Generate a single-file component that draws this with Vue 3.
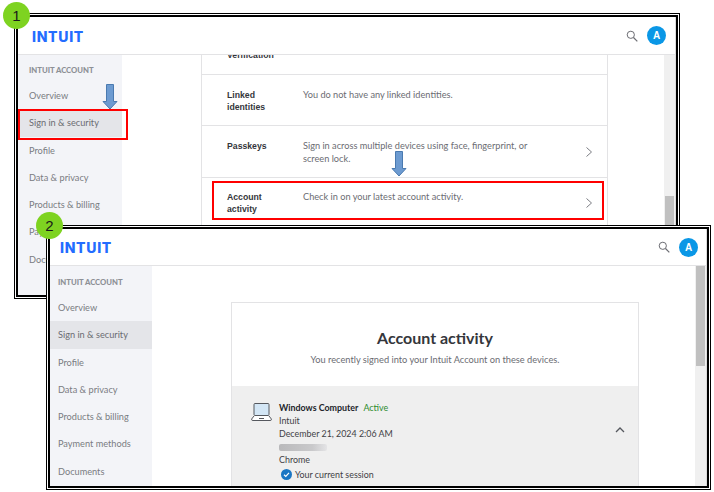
<script setup>
const navItems = ['Overview', 'Sign in & security', 'Profile', 'Data & privacy', 'Products & billing', 'Payment methods', 'Documents']
const rows = [
  { label: ['Linked', 'identities'], desc: 'You do not have any linked identities.', chevron: false, cls: 'row-linked' },
  { label: ['Passkeys'], desc: 'Sign in across multiple devices using face, fingerprint, or screen lock.', chevron: true, cls: 'row-passkeys' },
  { label: ['Account', 'activity'], desc: 'Check in on your latest account activity.', chevron: true, cls: 'row-activity' }
]
const details = ['Intuit', 'December 21, 2024 2:06 AM']
</script>

<template>
  <div class="page">
    <section class="window window-one">
      <div class="frame">
        <header class="topbar">
          <span class="logo">INTUIT</span>
          <span class="top-actions">
            <svg class="search" viewBox="0 0 12 12" width="12" height="12"><circle cx="4.8" cy="4.8" r="3.6" fill="none" stroke="#6b6c72" stroke-width="1"/><path d="M7.5 7.5L11.3 11.3" stroke="#6b6c72" stroke-width="1.2"/></svg>
            <span class="avatar">A</span>
          </span>
        </header>
        <div class="body">
          <nav class="sidebar">
            <div class="nav-title">INTUIT ACCOUNT</div>
            <div v-for="item in navItems" :key="item" class="nav-item" :class="{ selected: item === 'Sign in & security' }">{{ item }}</div>
          </nav>
          <main class="content">
            <div class="card">
              <div class="row row-clipped"><span class="label">Verification</span></div>
              <div v-for="row in rows" :key="row.cls" class="row" :class="row.cls">
                <span class="label"><span v-for="l in row.label" :key="l" class="label-line">{{ l }}</span></span>
                <span class="desc">{{ row.desc }}</span>
                <svg v-if="row.chevron" class="chevron" viewBox="0 0 6 10" width="6" height="10"><path d="M.5 .5L5.5 5L.5 9.5" fill="none" stroke="#7b7c82" stroke-width="1"/></svg>
              </div>
            </div>
          </main>
          <div class="scrollbar"><div class="thumb"></div></div>
        </div>
      </div>
    </section>

    <div class="callout callout-nav"></div>
    <div class="callout callout-row"></div>
    <svg class="arrow arrow-nav" viewBox="0 0 16 26" width="16" height="26"><path d="M4.5 .5H11.5V17.5H15L8 25L1 17.5H4.5Z" fill="#6d9bd1" stroke="#4a7ab0" stroke-width="1"/></svg>
    <svg class="arrow arrow-row" viewBox="0 0 16 26" width="16" height="26"><path d="M4.5 .5H11.5V17.5H15L8 25L1 17.5H4.5Z" fill="#6d9bd1" stroke="#4a7ab0" stroke-width="1"/></svg>
    <span class="badge badge-one">1</span>

    <section class="window window-two">
      <div class="frame">
        <header class="topbar">
          <span class="logo">INTUIT</span>
          <span class="top-actions">
            <svg class="search" viewBox="0 0 12 12" width="12" height="12"><circle cx="4.8" cy="4.8" r="3.6" fill="none" stroke="#6b6c72" stroke-width="1"/><path d="M7.5 7.5L11.3 11.3" stroke="#6b6c72" stroke-width="1.2"/></svg>
            <span class="avatar">A</span>
          </span>
        </header>
        <div class="body">
          <nav class="sidebar">
            <div class="nav-title">INTUIT ACCOUNT</div>
            <div v-for="item in navItems" :key="item" class="nav-item" :class="{ selected: item === 'Sign in & security' }">{{ item }}</div>
          </nav>
          <main class="content">
            <div class="card">
              <h1 class="title">Account activity</h1>
              <p class="subtitle">You recently signed into your Intuit Account on these devices.</p>
              <div class="device">
                <svg class="laptop" viewBox="0 0 21 18" width="21" height="18">
                  <rect x="3" y=".5" width="15" height="12" rx="1" fill="#d3e6f5" stroke="#55585e"/>
                  <path d="M3 13L.5 16.2Q.5 17.5 2 17.5H19Q20.5 17.5 20.5 16.2L18 13" fill="#fff" stroke="#55585e"/>
                  <path d="M8 15.5H13" stroke="#55585e"/>
                </svg>
                <div class="device-info">
                  <div class="device-name"><b>Windows Computer</b><span class="active">Active</span></div>
                  <div v-for="d in details" :key="d" class="device-line">{{ d }}</div>
                  <div class="device-line redacted-line"><span class="redacted"></span></div>
                  <div class="device-line">Chrome</div>
                  <div class="session">
                    <svg viewBox="0 0 11 11" width="11" height="11"><circle cx="5.5" cy="5.5" r="5.5" fill="#1a76c4"/><path d="M3 5.7L4.8 7.4L8 3.9" fill="none" stroke="#fff" stroke-width="1.2"/></svg>
                    <span>Your current session</span>
                  </div>
                </div>
                <svg class="chevron-up" viewBox="0 0 10 6" width="10" height="6"><path d="M1 5L5 1L9 5" fill="none" stroke="#55585e" stroke-width="1.3"/></svg>
              </div>
            </div>
          </main>
          <div class="scrollbar"><div class="thumb"></div></div>
        </div>
      </div>
    </section>
    <span class="badge badge-two">2</span>
  </div>
</template>

<style>
html, body { margin: 0; background: #fff; }
</style>

<style scoped>
.page {
  position: relative;
  width: 714px;
  height: 492px;
  overflow: hidden;
  background: #fff;
  font-family: Lato, "Open Sans", sans-serif;
}
.window {
  position: absolute;
  box-sizing: border-box;
  border: 1px solid #000;
  padding: 1px;
  background: #fff;
}
.window-one { left: 14px; top: 13px; width: 666px; height: 286px; }
.window-two { left: 46px; top: 225px; width: 665px; height: 265px; }
.frame {
  height: 100%;
  box-sizing: border-box;
  border: 2px solid #000;
  display: flex;
  flex-direction: column;
  overflow: hidden;
  background: #fff;
}
.topbar {
  flex: none;
  height: 37px;
  box-sizing: content-box;
  display: flex;
  align-items: center;
  justify-content: space-between;
  border-bottom: 1px solid #e3e3e5;
  border-right: 1px solid #dcdcdc;
}
.window-one .topbar { padding: 0 9px 0 14px; }
.window-two .topbar { height: 36px; padding: 0 8px 0 10px; }
.logo {
  font-family: Inter, sans-serif;
  font-weight: 800;
  font-size: 14px;
  letter-spacing: 0.7px;
  color: #236cff;
  line-height: 1;
  padding-top: 2px;
}
.top-actions { display: flex; align-items: center; gap: 9px; }
.search { display: block; }
.avatar {
  width: 19px;
  height: 19px;
  border-radius: 50%;
  background: #0a97e6;
  color: #fff;
  font: 700 10px/19px "Liberation Sans", sans-serif;
  text-align: center;
}
.body { flex: 1; min-height: 0; display: flex; }
.sidebar { flex: none; background: #f3f4f8; }
.window-one .sidebar { width: 104px; }
.window-two .sidebar { width: 102px; }
.nav-title {
  height: 27px;
  padding-top: 10px;
  box-sizing: border-box;
  font-size: 7.7px;
  line-height: 11px;
  font-weight: 900;
  color: #8d9096;
}
.window-two .nav-title { height: 28px; padding-top: 11px; }
.nav-item {
  height: 27.3px;
  line-height: 27px;
  font-size: 9.2px;
  color: #7a7c82;
  white-space: nowrap;
}
.window-one .nav-title, .window-one .nav-item { padding-left: 11px; }
.window-two .nav-title, .window-two .nav-item { padding-left: 8px; }
.nav-item.selected { background: #e4e5e9; color: #6b6c72; }
.window-one .nav-item.selected { box-shadow: inset 2px 0 0 #2a6fb5; }
.content { flex: 1; min-width: 0; overflow: hidden; padding-left: 79px; }
.card {
  box-sizing: border-box;
  background: #fff;
  border-left: 1px solid #e3e3e5;
  border-right: 1px solid #e3e3e5;
}
.window-one .card { width: 407px; }
.window-two .card { width: 408px; margin-top: 36px; border-top: 1px solid #e3e3e5; height: 300px; }
.row {
  display: flex;
  box-sizing: border-box;
  position: relative;
  padding: 14px 19px 0 25px;
  border-bottom: 1px solid #e3e3e5;
}
.row-clipped { height: 20px; padding-top: 0; align-items: flex-end; overflow: hidden; }
.row-clipped .label { line-height: 12px; margin-bottom: 13px; }
.row-linked { height: 51px; }
.row-passkeys { height: 52px; }
.row-activity { height: 52px; padding-top: 13px; }
.label {
  flex: none;
  width: 76px;
  font: 700 8.7px/12.3px "Liberation Sans", sans-serif;
  color: #34363b;
}
.label-line { display: block; }
.desc {
  width: 250px;
  font-size: 9.2px;
  line-height: 12.8px;
  color: #6b6c72;
}
.chevron { position: absolute; right: 15px; top: 21px; }
.row-activity .chevron { top: 20px; }
.scrollbar { flex: none; width: 12px; box-sizing: border-box; background: #f0f0f0; border-right: 1px solid #dcdcdc; }
.window-one .scrollbar { padding-top: 141px; }
.thumb { background: #c0c0c0; margin: 0 1px; }
.window-one .thumb { height: 110px; }
.window-two .thumb { height: 100px; }
.title {
  margin: 25px 0 0;
  text-align: center;
  font-size: 16px;
  line-height: 20px;
  font-weight: 700;
  color: #34363b;
}
.subtitle {
  margin: 5px 0 0;
  text-align: center;
  font-size: 9.25px;
  line-height: 14px;
  color: #6b6c72;
}
.device {
  position: relative;
  margin-top: 19px;
  height: 120px;
  background: #efefef;
  display: flex;
  gap: 7px;
  padding: 15px 0 0 19px;
  box-sizing: border-box;
}
.laptop { flex: none; margin-top: 2px; }
.device-info { font-size: 8.9px; color: #3f4146; }
.device-name { line-height: 13px; display: flex; gap: 5px; }
.device-name b { color: #22242a; }
.active { color: #2e8b2e; }
.device-line { height: 13px; line-height: 13px; }
.redacted-line { box-sizing: border-box; padding-top: 4px; }
.redacted { display: block; width: 48px; height: 7px; background: linear-gradient(90deg, #b9b9bb, #c9c9cb 70%, #e4e4e6); border-radius: 2px; }
.session { display: flex; align-items: center; gap: 3px; margin: 2px 0 0 2px; height: 13px; }
.chevron-up { position: absolute; right: 13px; top: 41px; }
.callout {
  position: absolute;
  box-sizing: border-box;
  border: 2px solid #f00;
}
.callout-nav { left: 18px; top: 109px; width: 110px; height: 31px; }
.callout-row { left: 212px; top: 181px; width: 392px; height: 39px; }
.arrow { position: absolute; display: block; }
.arrow-nav { left: 102px; top: 84px; }
.arrow-row { left: 391px; top: 151px; }
.badge {
  position: absolute;
  width: 27px;
  height: 27px;
  border-radius: 50%;
  background: #7ed321;
  color: #1a1a1a;
  font: 15px/27px "Liberation Sans", sans-serif;
  text-align: center;
}
.badge-one { left: 3px; top: 2px; }
.badge-two { left: 36px; top: 212px; }
</style>
